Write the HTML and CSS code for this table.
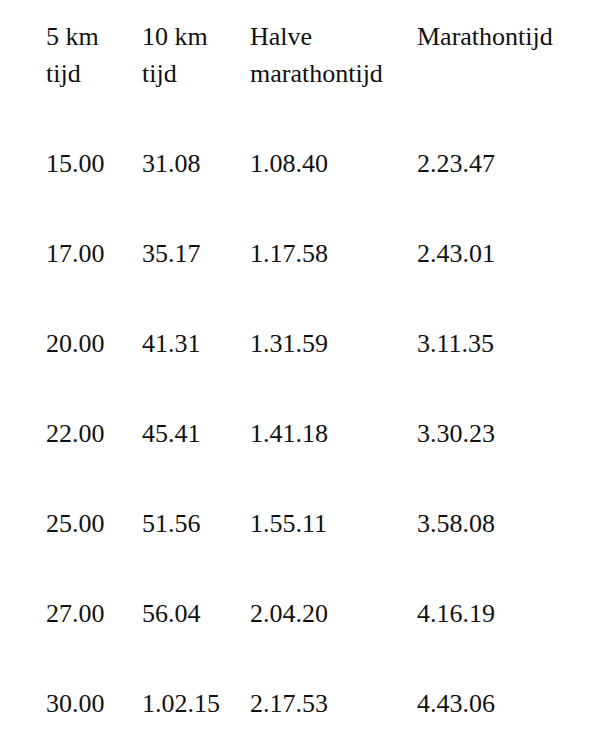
FILE: index.html
```html
<!DOCTYPE html>
<html lang="nl">
<head>
<meta charset="utf-8">
<link rel="stylesheet" href="styles.css">
</head>
<body>
<table class="times">
  <thead>
    <tr><th class="c1">5 km<br>tijd</th><th class="c2">10 km<br>tijd</th><th class="c3">Halve<br>marathontijd</th><th class="c4">Marathontijd</th></tr>
  </thead>
  <tbody>
    <tr><td>15.00</td><td>31.08</td><td>1.08.40</td><td>2.23.47</td></tr>
    <tr><td>17.00</td><td>35.17</td><td>1.17.58</td><td>2.43.01</td></tr>
    <tr><td>20.00</td><td>41.31</td><td>1.31.59</td><td>3.11.35</td></tr>
    <tr><td>22.00</td><td>45.41</td><td>1.41.18</td><td>3.30.23</td></tr>
    <tr><td>25.00</td><td>51.56</td><td>1.55.11</td><td>3.58.08</td></tr>
    <tr><td>27.00</td><td>56.04</td><td>2.04.20</td><td>4.16.19</td></tr>
    <tr><td>30.00</td><td>1.02.15</td><td>2.17.53</td><td>4.43.06</td></tr>
  </tbody>
</table>
</body>
</html>
```
FILE: styles.css
```css
html, body {
  margin: 0;
  background: #ffffff;
}
body {
  padding: 18px 0 0 46px;
  font-family: "Liberation Serif", "Times New Roman", serif;
  font-size: 26px;
  line-height: 37px;
  color: #111111;
}
.times {
  border-collapse: collapse;
  table-layout: fixed;
}
.times th, .times td {
  text-align: left;
  font-weight: normal;
  vertical-align: top;
  padding: 26px 0 27px 0;
}
.times th {
  padding-top: 0;
}
.c1 { width: 96px; }
.c2 { width: 108px; }
.c3 { width: 167px; }
.c4 { width: 180px; }
```
